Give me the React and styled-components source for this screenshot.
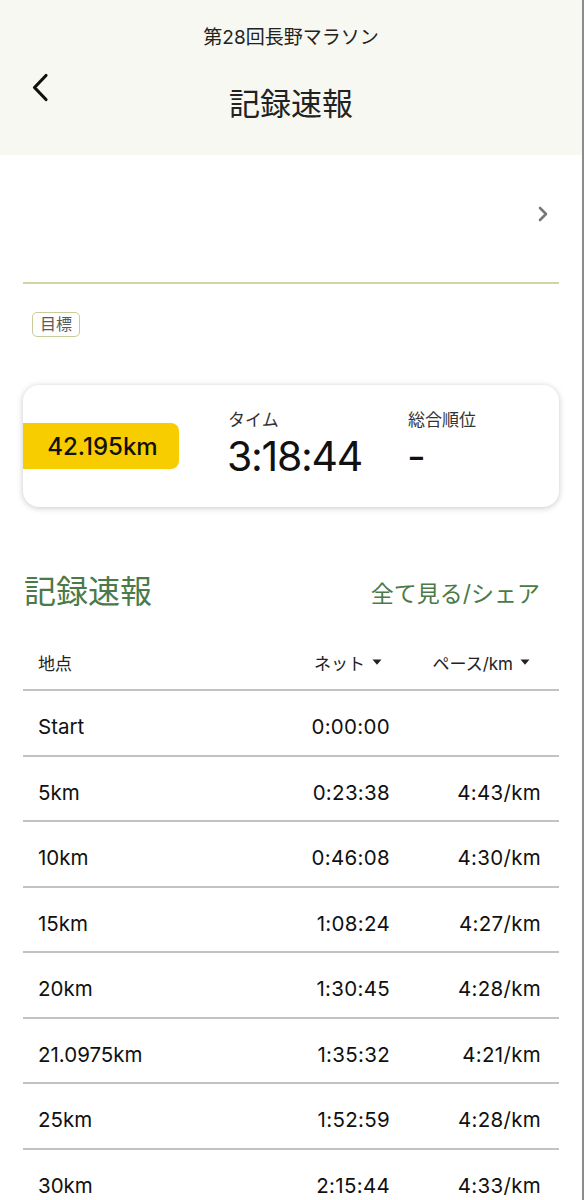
import React from 'react'
import styled, { createGlobalStyle } from 'styled-components'

const GlobalStyle = createGlobalStyle`
body{
    margin:0;
    background:#fff;
    font-family: Inter, "Noto Sans CJK JP", sans-serif;
    color:#111;
}
`;

const splits = [
    { point: 'Start', net: '0:00:00', pace: '' },
    { point: '5km', net: '0:23:38', pace: '4:43/km' },
    { point: '10km', net: '0:46:08', pace: '4:30/km' },
    { point: '15km', net: '1:08:24', pace: '4:27/km' },
    { point: '20km', net: '1:30:45', pace: '4:28/km' },
    { point: '21.0975km', net: '1:35:32', pace: '4:21/km' },
    { point: '25km', net: '1:52:59', pace: '4:28/km' },
    { point: '30km', net: '2:15:44', pace: '4:33/km' },
];

const Caret = () => (
    <svg width="10" height="6" viewBox="0 0 10 6"><path d="M0.5 0.5h9L5 5.8z" fill="#222" /></svg>
);

export default function App() {
    return (
        <Page>
            <GlobalStyle />
            <Header>
                <EventName>第28回長野マラソン</EventName>
                <TitleRow>
                    <BackBtn>
                        <svg width="18" height="30" viewBox="0 0 18 30" fill="none">
                            <path d="M15 2.5L3.5 14.5 15 26.5" stroke="#111" strokeWidth="3.2" strokeLinecap="round" strokeLinejoin="round" />
                        </svg>
                    </BackBtn>
                    <Title>記録速報</Title>
                </TitleRow>
            </Header>

            <Runner>
                <svg width="12" height="18" viewBox="0 0 12 18" fill="none">
                    <path d="M3 3l6 6-6 6" stroke="#777" strokeWidth="2.6" strokeLinecap="round" strokeLinejoin="round" />
                </svg>
            </Runner>

            <GoalRow>
                <Badge>目標</Badge>
            </GoalRow>

            <ResultCard>
                <DistanceTag>42.195km</DistanceTag>
                <Stat>
                    <StatLabel>タイム</StatLabel>
                    <StatValue>3:18:44</StatValue>
                </Stat>
                <Stat>
                    <StatLabel>総合順位</StatLabel>
                    <StatValue>-</StatValue>
                </Stat>
            </ResultCard>

            <SectionHead>
                <SectionTitle>記録速報</SectionTitle>
                <SectionLink>全て見る/シェア</SectionLink>
            </SectionHead>

            <Table>
                <HeadRow>
                    <span>地点</span>
                    <HeadCell $pad={8}>ネット <Caret /></HeadCell>
                    <HeadCell $pad={11}>ペース/km <Caret /></HeadCell>
                </HeadRow>
                {splits.map( ( s ) => (
                    <Row key={s.point}>
                        <span>{s.point}</span>
                        <Num>{s.net}</Num>
                        <Num>{s.pace}</Num>
                    </Row>
                ) )}
            </Table>
        </Page>
    )
};

const Page = styled.div`
width:582px;
min-height:1200px;
border-right:2px solid #8c8c8c;
background:#fff;
overflow:hidden;
`;

const Header = styled.header`
background:#f7f8f1;
height:155px;
display:flex;
flex-direction:column;
align-items:center;
padding-top:26px;
box-sizing:border-box;
`;

const EventName = styled.div`
font-size:19px;
line-height:24px;
color:#222;
`;

const TitleRow = styled.div`
position:relative;
width:100%;
display:flex;
justify-content:center;
margin-top:34px;
`;

const BackBtn = styled.div`
position:absolute;
left:31px;
top:-11px;
`;

const Title = styled.h1`
margin:0;
font-size:31px;
font-weight:400;
line-height:40px;
color:#222;
`;

const Runner = styled.div`
height:129px;
margin:0 23px;
border-bottom:2px solid #cfd4a8;
display:flex;
justify-content:flex-end;
align-items:flex-start;
padding:50px 10px 0 0;
box-sizing:border-box;
`;

const GoalRow = styled.div`
padding:28px 32px 0;
display:flex;
`;

const Badge = styled.span`
display:inline-block;
font-size:16px;
line-height:23px;
padding:0 7px;
color:#5a5a5a;
border:1.5px solid #c8cb9a;
border-radius:5px;
`;

const ResultCard = styled.div`
margin:48px 23px 0;
height:122px;
border-radius:16px;
background:#fff;
box-shadow:0 1px 6px rgba(0,0,0,0.22);
display:flex;
align-items:center;
`;

const DistanceTag = styled.div`
flex-shrink:0;
background:#f8cd00;
width:156px;
height:46px;
border-radius:0 8px 8px 0;
display:flex;
align-items:center;
justify-content:center;
font-size:24px;
font-weight:500;
color:#111;
margin-right:49px;
padding-left:3px;
box-sizing:border-box;
`;

const Stat = styled.div`
display:flex;
flex-direction:column;
width:180px;
flex-shrink:0;
margin-top:-4px;
`;

const StatLabel = styled.span`
font-size:17px;
color:#333;
line-height:24px;
`;

const StatValue = styled.span`
font-size:41px;
line-height:48px;
letter-spacing:-1.3px;
color:#111;
margin-left:-1px;
`;

const SectionHead = styled.div`
display:flex;
justify-content:space-between;
align-items:center;
padding:65px 42px 0 24px;
`;

const SectionTitle = styled.h2`
margin:0;
font-size:32px;
font-weight:400;
color:#4b7a48;
line-height:40px;
`;

const SectionLink = styled.a`
font-size:23px;
color:#4b7a48;
`;

const Table = styled.div`
margin:21px 23px 0;
`;

const RowBase = styled.div`
display:grid;
grid-template-columns:1fr 120px 151px;
align-items:center;
padding:0 18px 0 15px;
border-bottom:2px solid #c2c2c2;
box-sizing:border-box;
`;

const HeadRow = styled( RowBase )`
height:58px;
font-size:17px;
color:#222;
padding-top:2px;
`;

const HeadCell = styled.span`
display:flex;
align-items:center;
justify-content:flex-end;
gap:7px;
padding-right:${( p ) => p.$pad}px;
`;

const Row = styled( RowBase )`
height:65.5px;
font-size:20.5px;
color:#111;
padding-top:8px;
`;

const Num = styled.span`
text-align:right;
letter-spacing:0.3px;
`;
